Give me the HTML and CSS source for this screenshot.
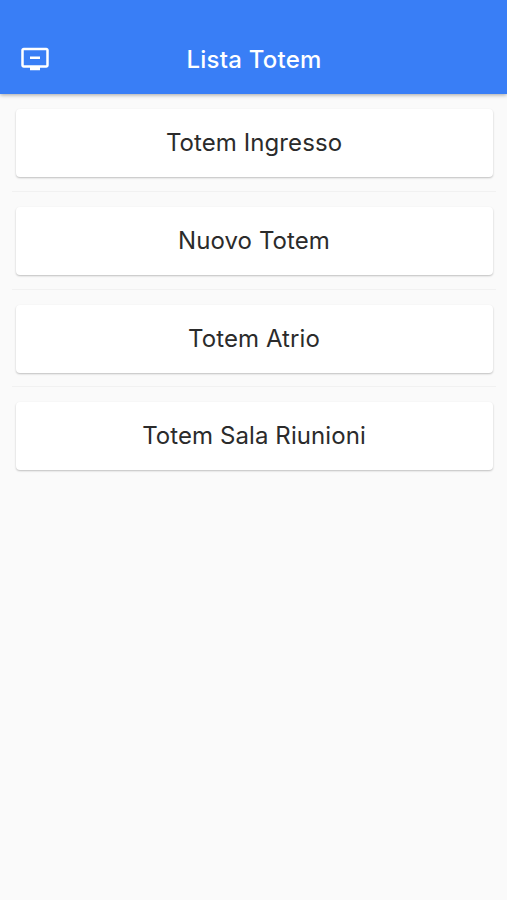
FILE: index.html
```
<!DOCTYPE html>
<html lang="it">
<head>
    <meta charset="UTF-8">
    <meta name="viewport" content="width=device-width, initial-scale=1.0">
    <title>Lista Totem</title>
    <link rel="stylesheet" href="styles.css">
</head>
<body>
    <header class="appBar">
        <svg class="appIcon" viewBox="0 0 24 24">
            <path d="M21 3H3c-1.100 0-2 .9-2 2v12c0 1.100.9 2 2 2h5v2h8v-2h5c1.100 0 1.990-.9 1.990-2L23 5c0-1.100-.9-2-2-2zm0 14H3V5h18v12zm-5-7v2H8v-2h8z"/>
        </svg>
        <h1 class="title">Lista Totem</h1>
    </header>
    <ul class="totemList">
        <li><div class="card">Totem Ingresso</div></li>
        <li><div class="card">Nuovo Totem</div></li>
        <li><div class="card">Totem Atrio</div></li>
        <li><div class="card">Totem Sala Riunioni</div></li>
    </ul>
</body>
</html>
```

FILE: styles.css
```
*{
    padding: 0px;
    margin: 0px;
    list-style: none;
    box-sizing: border-box;
}

body {
    min-height: 900px;
    background-color: #fafafa;
    font-family: Inter, "Liberation Sans", sans-serif;
    color: #2b2b2b;
}

.appBar {
    display: grid;
    grid-template-columns: 30px 1fr 30px;
    align-items: center;
    height: 94px;
    padding: 25px 19px 0 20px;
    color: #fff;
    background-color: #397ef6;
    box-shadow: 0 1px 4px rgba(0, 0, 0, 0.35);
}

.appIcon {
    width: 30px;
    height: 30px;
    margin-bottom: 1px;
    fill: #fff;
}

.title {
    font-size: 24px;
    font-weight: 500;
    line-height: 30px;
    letter-spacing: 0.25px;
    text-align: center;
}

.totemList {
    padding: 0 11px 0 12px;
}

.totemList li {
    height: 97.8px;
    padding: 15px 3.500px 0;
    border-bottom: 1px solid #f1f1f1;
}

.totemList li:last-child {
    border-bottom: none;
}

.card {
    height: 68px;
    line-height: 68px;
    font-size: 24px;
    letter-spacing: 0.08px;
    text-align: center;
    background-color: #fff;
    border-radius: 4px;
    box-shadow: 0 1px 2px rgba(0, 0, 0, 0.24);
}
```
